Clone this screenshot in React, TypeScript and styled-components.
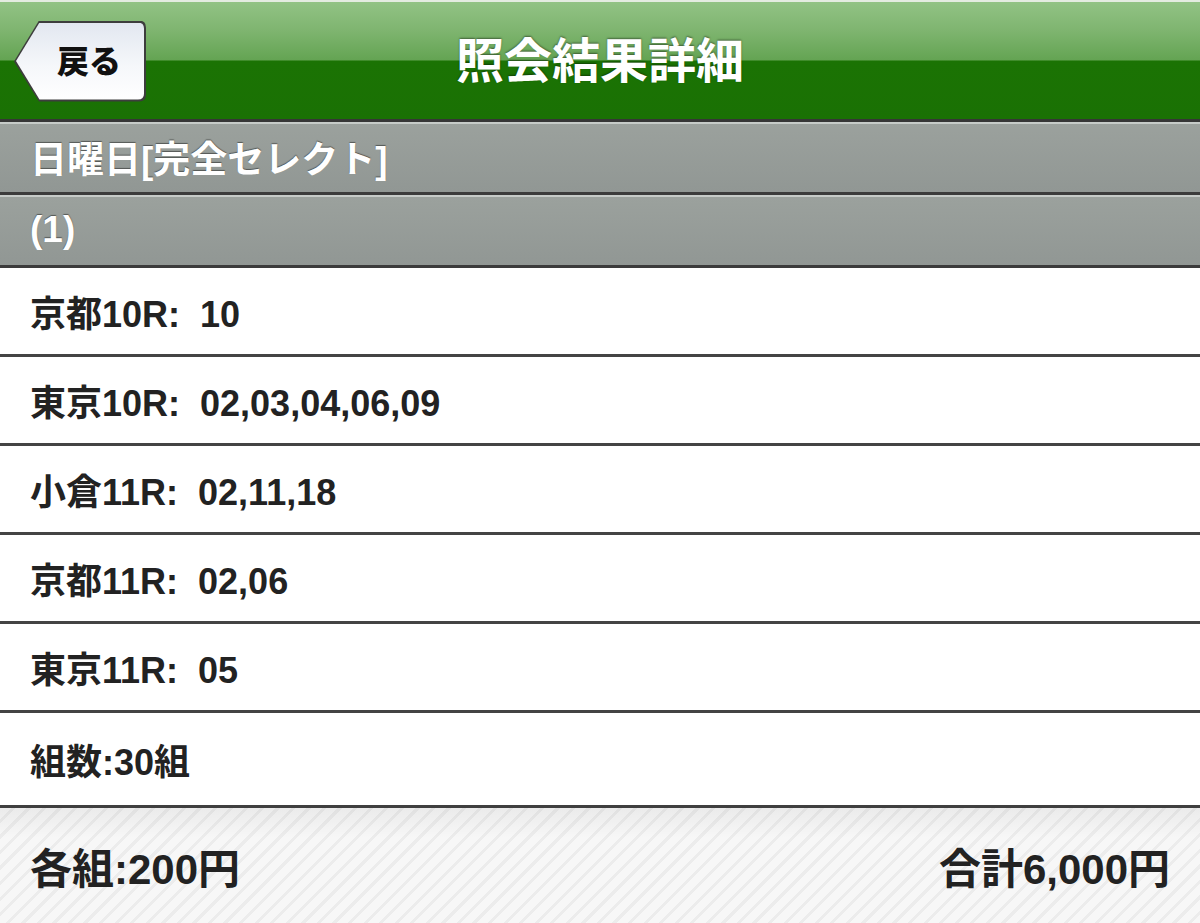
import { createGlobalStyle, styled } from "styled-components";

const GlobalStyle = createGlobalStyle`
  html, body {
    margin: 0;
    padding: 0;
    background-color: white;
  }
  body {
    font-family: "Liberation Sans", "Noto Sans CJK JP", sans-serif;
  }
`;

const Page = styled.div`
  display: flex;
  flex-direction: column;
  width: 100%;
  min-height: 923px;
`;

const Header = styled.header`
  display: grid;
  grid-template-columns: 1fr auto 1fr;
  align-items: center;
  height: 116px;
  padding: 3px 14px 0;
  border-bottom: 3px solid #363636;
  box-shadow: inset 0 2px 0 #e4ece1;
  background: linear-gradient(
    to bottom,
    #93c486 0px,
    #7fb570 30px,
    #64a453 60px,
    #1b7304 61px,
    #1a7104 100%
  );
`;

const BackOuter = styled.button`
  justify-self: start;
  width: 132px;
  height: 81px;
  padding: 2px;
  border: 0;
  cursor: pointer;
  background: #3d3d3d;
  clip-path: path("M0 41 L25 0 H125 Q132 0 132 7 V74 Q132 81 125 81 H25 Z");
`;

const BackInner = styled.span`
  display: flex;
  align-items: center;
  justify-content: center;
  width: 100%;
  height: 100%;
  padding-left: 18px;
  padding-bottom: 4px;
  box-sizing: border-box;
  background: linear-gradient(to bottom, #e2e7f0, #f5f7fa 55%, #ffffff);
  clip-path: path("M0 38.5 L23.5 0 H122 Q128 0 128 6 V71 Q128 77 122 77 H23.5 Z");
  color: #111;
  font-family: "Liberation Sans", "Noto Sans CJK JP", sans-serif;
  font-size: 32px;
  font-weight: 900;
  text-shadow: 0 1px 1px rgba(255, 255, 255, 0.8);
`;

const Title = styled.h1`
  margin: -8px 0 0;
  color: white;
  font-size: 48px;
  font-weight: 700;
  text-shadow: 0 -1px 2px rgba(0, 0, 0, 0.45);
`;

const Section = styled.div`
  display: flex;
  align-items: center;
  height: 66px;
  padding: 0 0 2px 30px;
  border-top: 2px solid #c6cbc8;
  border-bottom: 3px solid #3b3b3b;
  background: linear-gradient(to bottom, #9ba19d, #919794);
  color: white;
  font-size: 37px;
  font-weight: 700;
  text-shadow: 0 -1px 1px rgba(0, 0, 0, 0.45);
`;

const Row = styled.div<{ $last?: boolean }>`
  display: flex;
  align-items: center;
  height: ${(p) => (p.$last ? "92px" : "86px")};
  padding: 0 30px;
  border-bottom: ${(p) => (p.$last ? "0" : "3px solid #444")};
  background-color: white;
  color: #222;
  font-size: 36px;
  font-weight: 700;
  white-space: pre;
`;

const Footer = styled.footer`
  display: flex;
  align-items: center;
  justify-content: space-between;
  height: 115px;
  padding: 0 30px;
  border-top: 3px solid #3f3f3f;
  background:
    linear-gradient(to bottom, rgba(0, 0, 0, 0.05), rgba(0, 0, 0, 0) 30px),
    repeating-linear-gradient(
      135deg,
      #f7f7f7 0px,
      #f7f7f7 8px,
      #ececec 8px,
      #ececec 11px
    );
  color: #222;
  font-size: 42px;
  font-weight: 700;
`;

const races = [
  { name: "京都10R", horses: "10" },
  { name: "東京10R", horses: "02,03,04,06,09" },
  { name: "小倉11R", horses: "02,11,18" },
  { name: "京都11R", horses: "02,06" },
  { name: "東京11R", horses: "05" },
];

export default function App() {
  return (
    <Page>
      <GlobalStyle />
      <Header>
        <BackOuter>
          <BackInner>戻る</BackInner>
        </BackOuter>
        <Title>照会結果詳細</Title>
        <span />
      </Header>
      <Section>日曜日[完全セレクト]</Section>
      <Section>(1)</Section>
      {races.map((race) => (
        <Row key={race.name}>
          {race.name}:  {race.horses}
        </Row>
      ))}
      <Row $last>組数:30組</Row>
      <Footer>
        <span>各組:200円</span>
        <span>合計6,000円</span>
      </Footer>
    </Page>
  );
}
